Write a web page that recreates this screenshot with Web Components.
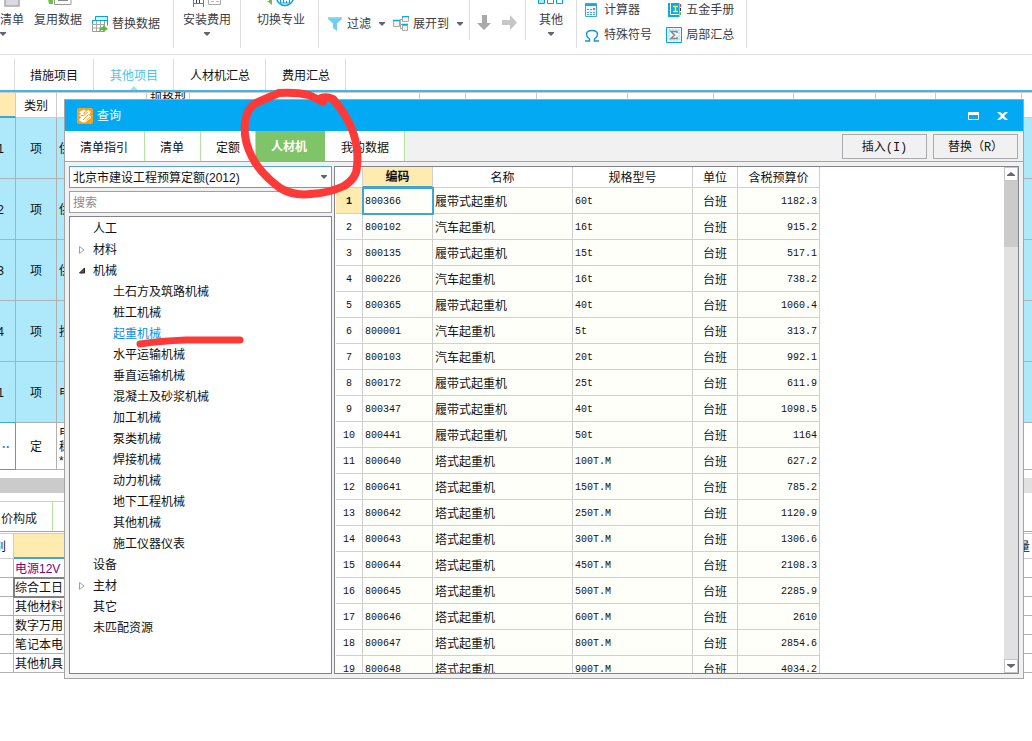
<!DOCTYPE html>
<html lang="zh-CN">
<head>
<meta charset="utf-8">
<title>查询</title>
<style>
html,body{margin:0;padding:0;background:#fff}
body{font:12px/16px "Liberation Sans","Noto Sans CJK SC",sans-serif;color:#111;overflow:hidden}
</style>
</head>
<body>
<budget-app></budget-app>
<script>
const define = (name, html, setup) => {
  const tpl = document.createElement('template');
  tpl.innerHTML = html;
  customElements.define(name, class extends HTMLElement {
    constructor() {
      super();
      this.attachShadow({mode: 'open'}).append(tpl.content.cloneNode(true));
    }
    connectedCallback() { if (setup && !this.ready) { this.ready = true; setup(this, this.shadowRoot); } }
  });
};

/* ---------- icons ---------- */
const CARET = '<svg width="6" height="4" viewBox="0 0 6 4"><path d="M0 0h6v1L3 4 0 1z" fill="#5f6470"/></svg>';
const ICONS = {
  caret: CARET,
  list: '<svg width="16" height="8" viewBox="0 0 16 8"><path d="M1-4h14V6H1z" fill="#dcd9e2" stroke="#a9a9a9" stroke-width="1.500"/></svg>',
  reuse: '<svg width="28" height="8" viewBox="0 0 28 8"><path d="M2 4h3l-1-5h5v5z" fill="#6cc04a"/><path d="M10.500-5H27V4.500H10.500z" fill="#fff" stroke="#999"/><path d="M14 .5h10" stroke="#888"/></svg>',
  swap: '<svg width="16" height="16" viewBox="0 0 16 16"><path d="M.5 4.500h12v11H.5z" fill="#fff" stroke="#9a9a9a"/><path d="M.5 8.500h12M.5 12h12M4.500 5v10M8.500 5v10" stroke="#a8a8a8"/><path d="M3.500.500h12v9" fill="none" stroke="#00a5df"/><path d="M.5 7.500v-3h3v-4h12v4H4" fill="#d7f3fd" stroke="#00a5df"/><path d="M7 15c0-3 2-4 4-4V9l5 4-5 3v-2c-2 0-3 0-4 1z" fill="#55c12c"/></svg>',
  install: '<svg width="30" height="8" viewBox="0 0 30 8"><path d="M1.500 0v7M11.500 0v7M1 3.500h11" stroke="#009fe0" fill="none"/><path d="M4.500 0v3M7.500 0v3" stroke="#345"/><path d="M16.500-3H28.500V4.500H16.500z" fill="#fff" stroke="#aaa"/><path d="M19 1.500h3M24 1.500h3" stroke="#e3b26b"/></svg>',
  major: '<svg width="30" height="8" viewBox="0 0 30 8"><path d="M1 1l5 4V-1H3v2z" fill="#6cc04a"/><circle cx="19" cy="-3" r="8.500" fill="#fff" stroke="#00a5df" stroke-width="1.500"/><path d="M14.500 0v3h9V0M17.500 0v3M20.500 1v2" fill="none" stroke="#00a5df"/></svg>',
  funnel: '<svg width="16" height="16" viewBox="0 0 16 16"><path d="M1 1h14v2L10 7.500V15l-4-3V7.500L1 3z" fill="#6fcff3"/><path d="M1 1h14v1.500H1z" fill="#8edcf8"/></svg>',
  expand: '<svg width="16" height="16" viewBox="0 0 16 16"><path d="M6 8.500h3M7.500 3v10M7 3.500h3M7 12.500h3" fill="none" stroke="#aaa"/><g fill="#fbf3e5" stroke="#a8a8a8"><path d="M.5 4.500h6v6h-6zM9.500.500h6v5h-6zM9.500 9.500h5v5h-5z"/></g><path d="M0 4.500h7M9 .500h7M9 8.500h6" stroke="#00a9ee" stroke-width="1.500"/></svg>',
  down: '<svg width="14" height="20" viewBox="0 0 14 20"><path d="M5 1h5v8h4L7 16 0 9h5z" fill="#a9a9a9"/></svg>',
  right: '<svg width="15" height="20" viewBox="0 0 15 20"><path d="M0 6h8V1l7 7.500L8 16v-5H0z" fill="#c6c6c6"/></svg>',
  other: '<svg width="26" height="8" viewBox="0 0 26 8"><g fill="#fff" stroke="#00a0e6"><path d="M.5-3h6v6.500h-6z" fill="#b6e4f8"/><path d="M9.500-3h6v6.500h-6zM18.500-3h6v6.500h-6z"/></g></svg>',
  calc: '<svg width="16" height="16" viewBox="0 0 16 16"><path d="M1.500 1.500h11v13h-11z" fill="#e7f6fd" stroke="#3aa9d8"/><path d="M1 3h12" stroke="#1aa9e6" stroke-width="2"/><path d="M3 7.500h2M6 7.500h2M3 10.500h2M6 10.500h2M9 10.500h2M3 12.500h2M6 12.500h2M9 12.500h2" stroke="#4aa2cc"/><path d="M9 7h2" stroke="#f55" stroke-width="2"/></svg>',
  book: '<svg width="16" height="16" viewBox="0 0 16 16"><path d="M2 1h11.500v14H2z" fill="#00aeef"/><path d="M4.500 1v11.500H13" fill="none" stroke="#fff"/><path d="M7 4.500h5M9.500 4.500v5M7 9.500h5" stroke="#ffe93b" stroke-width="1.500"/><path d="M14.500 2v3" stroke="#e33"/><path d="M14.500 6v3" stroke="#333"/><path d="M14.500 10v3" stroke="#6b3"/></svg>',
  omega: '<svg width="16" height="16" viewBox="0 0 16 16"><path d="M1 14h4.500v-2C3.500 10.500 2.500 9 2.500 7.500 2.500 5 5 3.500 8 3.500s5.500 1.500 5.500 4c0 1.500-1 3-3 4.500v2H15" fill="none" stroke="#1a94d0" stroke-width="1.500"/></svg>',
  sum: '<svg width="16" height="16" viewBox="0 0 16 16"><path d="M.5.500h15v15H.5z" fill="#e6f6fd" stroke="#00a5df"/><path d="M3 3h10v10H3z" fill="none" stroke="#9fd6ee" stroke-dasharray="2 1"/><path d="M11 6V4.500H5L8.500 8 5 11.500h6V10" fill="none" stroke="#888" stroke-width="1.500"/></svg>'
};
define('tool-icon', '<style>:host{display:block;flex:none}svg{display:block}</style>', (el, root) => {
  root.innerHTML += ICONS[el.getAttribute('name')];
});

/* ---------- toolbar ---------- */
define('tool-button', `
<style>
:host{display:block;flex:none}
button{all:unset;box-sizing:border-box;display:flex;align-items:center;gap:4px;color:#3c3c44;white-space:nowrap}
:host([big]) button{flex-direction:column;gap:0;height:48px}
.icon{display:block}
:host([big]) .icon{height:8px}
:host([big]) .label{line-height:24px}
:host([title]) .label{display:none}
.caret{display:none}
:host([menu]) .caret{display:block;margin-left:4px}
:host([menu][big]) .caret{margin:0}
:host([cut]) .caret{align-self:flex-start;margin-left:-3px}
</style>
<button type="button"><span class="icon"></span><span class="label"><slot></slot></span><span class="caret"><tool-icon name="caret"></tool-icon></span></button>`, (el, root) => {
  root.querySelector('.icon').innerHTML = `<tool-icon name="${el.getAttribute('icon')}"></tool-icon>`;
  if (el.hasAttribute('title')) root.querySelector('button').setAttribute('aria-label', el.title);
});
define('tool-group', `
<style>
:host{display:flex;align-items:center;height:48px;flex:none;border-right:1px solid #dcdcdc}
:host([short]){border-image:linear-gradient(#dcdcdc 39px,transparent 39px) 1}
</style><slot></slot>`);
define('app-toolbar', `
<style>
:host{display:flex;height:54px;border-bottom:1px solid #dedede;overflow:hidden}
.g1{padding-right:13px;gap:10px}
.g2{padding:0 9px}
.g3{padding:0 13px 0 16px}
.g4{padding:0 6px 0 8px;gap:8px}
.g5{padding:0 8px 0 7px;gap:11px}
.g6{padding:0 12px}
.grid{display:grid;grid-template:18px 18px / auto auto;gap:7px 14px;padding:0 12px 4px 7px;align-items:center}
</style>
<tool-group class="g1"><tool-button big menu cut icon="list">清单</tool-button><tool-button big icon="reuse">复用数据</tool-button><tool-button icon="swap">替换数据</tool-button></tool-group>
<tool-group class="g2"><tool-button big menu icon="install">安装费用</tool-button></tool-group>
<tool-group class="g3"><tool-button big icon="major">切换专业</tool-button></tool-group>
<tool-group class="g4" short><tool-button menu icon="funnel">过滤</tool-button><tool-button menu icon="expand">展开到</tool-button></tool-group>
<tool-group class="g5" short><tool-button icon="down" title="下移"></tool-button><tool-button icon="right" title="右移"></tool-button></tool-group>
<tool-group class="g6"><tool-button big menu icon="other">其他</tool-button></tool-group>
<tool-group><div class="grid"><tool-button icon="calc">计算器</tool-button><tool-button icon="book">五金手册</tool-button><tool-button icon="omega">特殊符号</tool-button><tool-button icon="sum">局部汇总</tool-button></div></tool-group>`);

/* ---------- main navigation ---------- */
define('page-nav', `
<style>
nav{display:flex;height:31px;padding:4px 0 0 14px;border-bottom:2px solid #45b6e2}
a{position:relative;padding:0 15px 0 16px;line-height:34px;color:#111;text-decoration:none;border-right:1px solid #dcdcdc;white-space:nowrap}
a:first-child{border-left:1px solid #dcdcdc;padding-left:15px}
a.on{color:#4dbff0}
a.on::after{content:"";position:absolute;left:50%;bottom:0;margin-left:-4px;border:4px solid transparent;border-top:0;border-bottom-color:#a9dff3}
</style>
<nav><a href="#m">措施项目</a><a href="#o" class="on">其他项目</a><a href="#r">人材机汇总</a><a href="#f">费用汇总</a></nav>`);

/* ---------- background grids ---------- */
define('budget-grid', `
<style>
:host{display:block;overflow:hidden}
table{table-layout:fixed;border-spacing:0;width:calc(100% + 14px);margin-left:-14px}
th,td{box-sizing:border-box;padding:2px 0 0;border-right:1px solid #b0b0b0;border-bottom:1px solid #b0b0b0;font-weight:normal;text-align:center;line-height:14px}
th{height:26px;border-color:#ccc;border-top:1px solid #ccc}
th.on{background:#ffebb0;border-bottom:2px solid #3ea6d5}
th.top{vertical-align:top;line-height:8px}
td{height:61px;background:#ade8fb}
td:nth-child(3){text-align:left;padding-left:2px}
th:last-child,td:last-child{border-right:0}
tr.edit td{height:47px;background:#fff}
tr.edit td:first-child{border-color:#3ea6d5;box-shadow:0 -1px #3ea6d5;color:#1b86d6;font-weight:bold;text-align:right;padding-right:5px}
</style>
<table><colgroup></colgroup><thead><tr></tr></thead><tbody></tbody></table>`, (el, root) => {
  const widths = [30, 41, 90, 43, 230, 46, 71, 91, 86, 80, 82, 60, 86, 0];
  const blank = n => '<td></td>'.repeat(n);
  root.querySelector('colgroup').innerHTML = widths.map(w => w ? `<col style="width:${w}px">` : '<col>').join('');
  root.querySelector('thead tr').innerHTML = '<th class="on"></th><th>类别</th><th></th><th class="top">规格型</th>' + '<th></th>'.repeat(10);
  const rows = [['1','项','供'],['2','项','供'],['3','项','供'],['4','项','按'],['1','项','电']];
  root.querySelector('tbody').innerHTML = rows.map(r => '<tr>' + r.map(c => `<td>${c}</td>`).join('') + blank(11) + '</tr>').join('')
    + '<tr class="edit"><td>··</td><td>定</td><td>电<br>稳<br>*</td>' + blank(11) + '</tr>';
});
define('detail-pane', `
<style>
:host{display:block;overflow:hidden}
.bar{margin:8px 0;height:15px;background:#e1e1e1}
.bar i{display:block;width:50%;height:15px;background:#cbcbcb}
.tabs{height:30px;border-bottom:1px solid #7cc36a}
.tabs div{display:flex;width:50%;border-top:1px solid #b4e3a0}
.tabs a{padding:0 15px 0 1px;line-height:34px;height:29px;color:#222;text-decoration:none;border-right:1px solid #b4e3a0}
table{table-layout:fixed;border-spacing:0;width:calc(100% + 12px);margin:1px 0 0 -12px}
th,td{box-sizing:border-box;height:19px;padding:2px 2px 0 1px;border-right:1px solid #b0b0b0;border-bottom:1px solid #b0b0b0;font-weight:normal;text-align:left;white-space:nowrap;line-height:14px}
th{height:26px;border-color:#ccc;border-top:1px solid #ccc;text-align:center}
th.on{background:#ffebb0;border-bottom:2px solid #3ea6d5}
th:last-child{text-align:right}
td:last-child,th:last-child{border-right:0}
.new{color:#800080}
.sel{outline:2px solid #808080;outline-offset:-1px}
</style>
<div class="bar"><i></i></div>
<div class="tabs"><div><a href="#c">价构成</a></div></div>
<table><colgroup><col style="width:26px"><col style="width:300px"><col></colgroup>
<thead><tr><th>别</th><th class="on"></th><th>量</th></tr></thead><tbody></tbody></table>`, (el, root) => {
  root.querySelector('tbody').innerHTML = [['电源12V','new'],['综合工日','sel'],['其他材料'],['数字万用'],['笔记本电'],['其他机具']]
    .map(([t, c]) => `<tr><td></td><td class="${c || ''}">${t}</td><td></td></tr>`).join('');
});

/* ---------- query dialog ---------- */
define('resource-tree', `
<style>
:host{display:block;border:1px solid #83838c;background:#fff;overflow:hidden;padding-top:1px}
ul{list-style:none;margin:0;padding:0}
li a{display:flex;align-items:center;height:21px;padding-left:9px;color:#111;text-decoration:none}
li li a{padding-left:29px}
svg{width:8px;height:8px;margin-right:6px;flex:none}
a.on{color:#0a8cf0}
</style><ul></ul>`, (el, root) => {
  const shut = '<svg viewBox="0 0 8 8"><path d="M.5.500v7L5 4z" fill="#fff" stroke="#a0a0a0"/></svg>';
  const open = '<svg viewBox="0 0 8 8"><path d="M5.500 1v5H.5z" fill="#555" stroke="#222"/></svg>';
  const none = '<svg></svg>';
  const item = (t, icon, kids) => `<li><a href="#t"${t === '起重机械' ? ' class="on"' : ''}>${icon}<span>${t}</span></a>${kids ? `<ul>${kids.map(k => item(k, none)).join('')}</ul>` : ''}</li>`;
  root.querySelector('ul').innerHTML = item('人工', none) + item('材料', shut)
    + item('机械', open, ['土石方及筑路机械','桩工机械','起重机械','水平运输机械','垂直运输机械','混凝土及砂浆机械','加工机械','泵类机械','焊接机械','动力机械','地下工程机械','其他机械','施工仪器仪表'])
    + item('设备', none) + item('主材', shut) + item('其它', none) + item('未匹配资源', none);
});
define('resource-table', `
<style>
:host{display:flex;border:1px solid #83838c;background:#fff;overflow:hidden;min-width:0}
.view{flex:1;min-width:0;overflow:hidden;padding-left:1px}
table{table-layout:fixed;border-spacing:0;width:484px}
th,td{box-sizing:border-box;height:26px;padding:2px 2px 0;border-right:1px solid #d0d0d0;border-bottom:1px solid #d0d0d0;font-weight:normal;text-align:left;line-height:16px;white-space:nowrap}
thead th{height:21px;text-align:center;padding:2px 0 0}
td{background:#fffffa}
tbody th,td.n{font-family:"Liberation Mono",monospace;font-size:10px}
tbody th{text-align:center;padding:2px 0 0}
.hot{background:#ffebb0;font-weight:bold}
thead .hot{border-bottom:2px solid #3ea6d5;padding-top:1px}
td.u{text-align:center}
td.p{text-align:right}
td.cur{outline:2px solid #3ea6d5;outline-offset:-1px}
.scroll{display:flex;flex-direction:column;width:14px;background:#e1e1e1}
.scroll button{all:unset;box-sizing:border-box;height:14px;border:1px solid #c4c4c4;background:#fff;display:flex;align-items:center;justify-content:center}
.scroll i{height:66px;background:#cbcbcb}
.scroll span{flex:1}
</style>
<div class="view"><table><colgroup><col style="width:27px"><col style="width:70px"><col style="width:140px"><col style="width:120px"><col style="width:45px"><col style="width:82px"></colgroup>
<thead><tr><th></th><th class="hot">编码</th><th>名称</th><th>规格型号</th><th>单位</th><th>含税预算价</th></tr></thead><tbody></tbody></table></div>
<div class="scroll"><button type="button" aria-label="向上"><svg width="8" height="4" viewBox="0 0 8 4"><path d="M0 4V3l4-3 4 3v1z" fill="#666873"/></svg></button><i></i><span></span><button type="button" aria-label="向下"><svg width="8" height="4" viewBox="0 0 8 4"><path d="M0 0v1l4 3 4-3V0z" fill="#666873"/></svg></button></div>`, (el, root) => {
  const L = '履带式起重机', Q = '汽车起重机', T = '塔式起重机';
  const data = [
    ['800366',L,'60t','1182.3'],['800102',Q,'16t','915.2'],['800135',L,'15t','517.1'],['800226',Q,'16t','738.2'],
    ['800365',L,'40t','1060.4'],['800001',Q,'5t','313.7'],['800103',Q,'20t','992.1'],['800172',L,'25t','611.9'],
    ['800347',L,'40t','1098.5'],['800441',L,'50t','1164'],['800640',T,'100T.M','627.2'],['800641',T,'150T.M','785.2'],
    ['800642',T,'250T.M','1120.9'],['800643',T,'300T.M','1306.6'],['800644',T,'450T.M','2108.3'],['800645',T,'500T.M','2285.9'],
    ['800646',T,'600T.M','2610'],['800647',T,'800T.M','2854.6'],['800648',T,'900T.M','4034.2']];
  root.querySelector('tbody').innerHTML = data.map(([code, name, spec, price], i) =>
    `<tr><th class="${i ? '' : 'hot'}">${i + 1}</th><td class="n${i ? '' : ' cur'}">${code}</td><td>${name}</td><td class="n">${spec}</td><td class="u">台班</td><td class="n p">${price}</td></tr>`).join('');
});
define('query-dialog', `
<style>
:host{display:flex;flex-direction:column;box-sizing:border-box;border:1px solid #a5a5a8;background:#f1f1f1}
header{display:flex;align-items:center;height:31px;padding:0 15px 0 12px;background:#03a9f3;color:#fff;gap:4px}
h1{flex:1;margin:0;padding-top:1px;font-size:12px;font-weight:normal}
header button{all:unset;display:flex}
header button:last-child{margin-left:14px}
.strip{display:flex;height:30px;border-bottom:1px solid #7cc36a}
.strip a{box-sizing:border-box;padding:0 16px 0 15px;line-height:34px;background:#fff;border-right:1px solid #b4e3a0;color:#111;text-decoration:none;white-space:nowrap}
.strip a.on{width:69px;background:#7fc469;border-color:#7fc469;color:#fff;font-weight:bold;line-height:32px}
.strip a:nth-child(3){padding-right:15px}
.strip a:nth-child(5){padding:0 15px 0 16px}
.act{display:flex;gap:6px;margin:3px 5px 2px auto}
.act button{box-sizing:border-box;width:85px;height:25px;padding:2px 0 0;border:1px solid #a9a9ad;border-radius:0;background:#f1f1f1;font:12px/16px "Liberation Mono","Noto Sans CJK SC",monospace;color:#111}
main{display:flex;flex:1;min-height:0;gap:2px;padding:4px}
aside{display:flex;flex-direction:column;width:263px;min-width:0}
.combo{position:relative;display:flex}
.combo svg{position:absolute;right:5px;top:9px;pointer-events:none}
select,input{box-sizing:border-box;width:100%;height:22px;margin:0;padding:1px 3px 0;border:1px solid #55a6cc;border-radius:0;background:#fff;color:#111;font:12px/16px "Liberation Sans","Noto Sans CJK SC",sans-serif;appearance:none}
input{border-color:#a0a0a0;margin:3px 0}
input::placeholder{color:#8a8a8a;opacity:1}
resource-tree{flex:1;min-height:0}
resource-table{flex:1}
</style>
<header>
<svg width="16" height="16" viewBox="0 0 16 16"><rect width="16" height="16" rx="2" fill="#f9a01b"/><path d="M2 4l5-2.500 2 1.500-3 2 1 1 4-4 3 1.500-2 4 2 .5v2L8 14.500 4.500 14 2 12l2-3-2-2 2-1z" fill="#fff"/><path d="M4 7.500h2.500L11 4M6 12l5.500-5.500M9 12.500l3.500-3" fill="none" stroke="#f9a01b"/></svg>
<h1>查询</h1>
<button type="button" aria-label="最大化"><svg width="11" height="8" viewBox="0 0 11 8"><path d="M.5.500h10v7H.5z" fill="none" stroke="#fff"/><path d="M0 1.500h11" stroke="#fff" stroke-width="3"/></svg></button>
<button type="button" aria-label="关闭"><svg width="11" height="8" viewBox="0 0 11 8"><path d="M0 0h3l2.500 2L8 0h3L7 4l4 4H8L5.500 6 3 8H0l4-4z" fill="#fff"/></svg></button>
</header>
<div class="strip"><a href="#1">清单指引</a><a href="#2">清单</a><a href="#3">定额</a><a href="#4" class="on">人材机</a><a href="#5">我的数据</a>
<div class="act"><button type="button">插入(I)</button><button type="button">替换（R）</button></div></div>
<main>
<aside>
<div class="combo"><select aria-label="定额库"><option>北京市建设工程预算定额(2012)</option></select>${CARET}</div>
<input type="search" aria-label="搜索" placeholder="搜索">
<resource-tree></resource-tree>
</aside>
<resource-table></resource-table>
</main>`);

/* ---------- red pen marks ---------- */
define('pen-marks', `
<style>:host{display:block;pointer-events:none}svg{display:block;overflow:visible}</style>
<svg width="130" height="270" viewBox="0 0 130 270" fill="none" stroke="#fc3b39" stroke-linecap="round" stroke-linejoin="round">
<path stroke-width="8" d="M184 12L170 5Q157 2 140 3Q128 8 117 13Q108 18 106 32Q104 50 113 67Q121 83 141 98Q154 106 172 104Q190 103 205 96Q218 88 218 76Q220 60 214 42Q208 25 194 9Q188 6 182 8"/>
<path stroke-width="7" d="M1 254Q20 251 47 250L101 250"/>
</svg>`);

define('budget-app', `
<style>
:host{display:block;position:relative;overflow:hidden;background:#fff}
query-dialog{position:absolute;left:64px;right:8px;top:99px;height:580px}
pen-marks{position:absolute;left:139px;top:90px}
footer{height:68px}
</style>
<app-toolbar></app-toolbar>
<page-nav></page-nav>
<budget-grid></budget-grid>
<detail-pane></detail-pane>
<footer></footer>
<query-dialog></query-dialog>
<pen-marks></pen-marks>`);
</script>
</body>
</html>
